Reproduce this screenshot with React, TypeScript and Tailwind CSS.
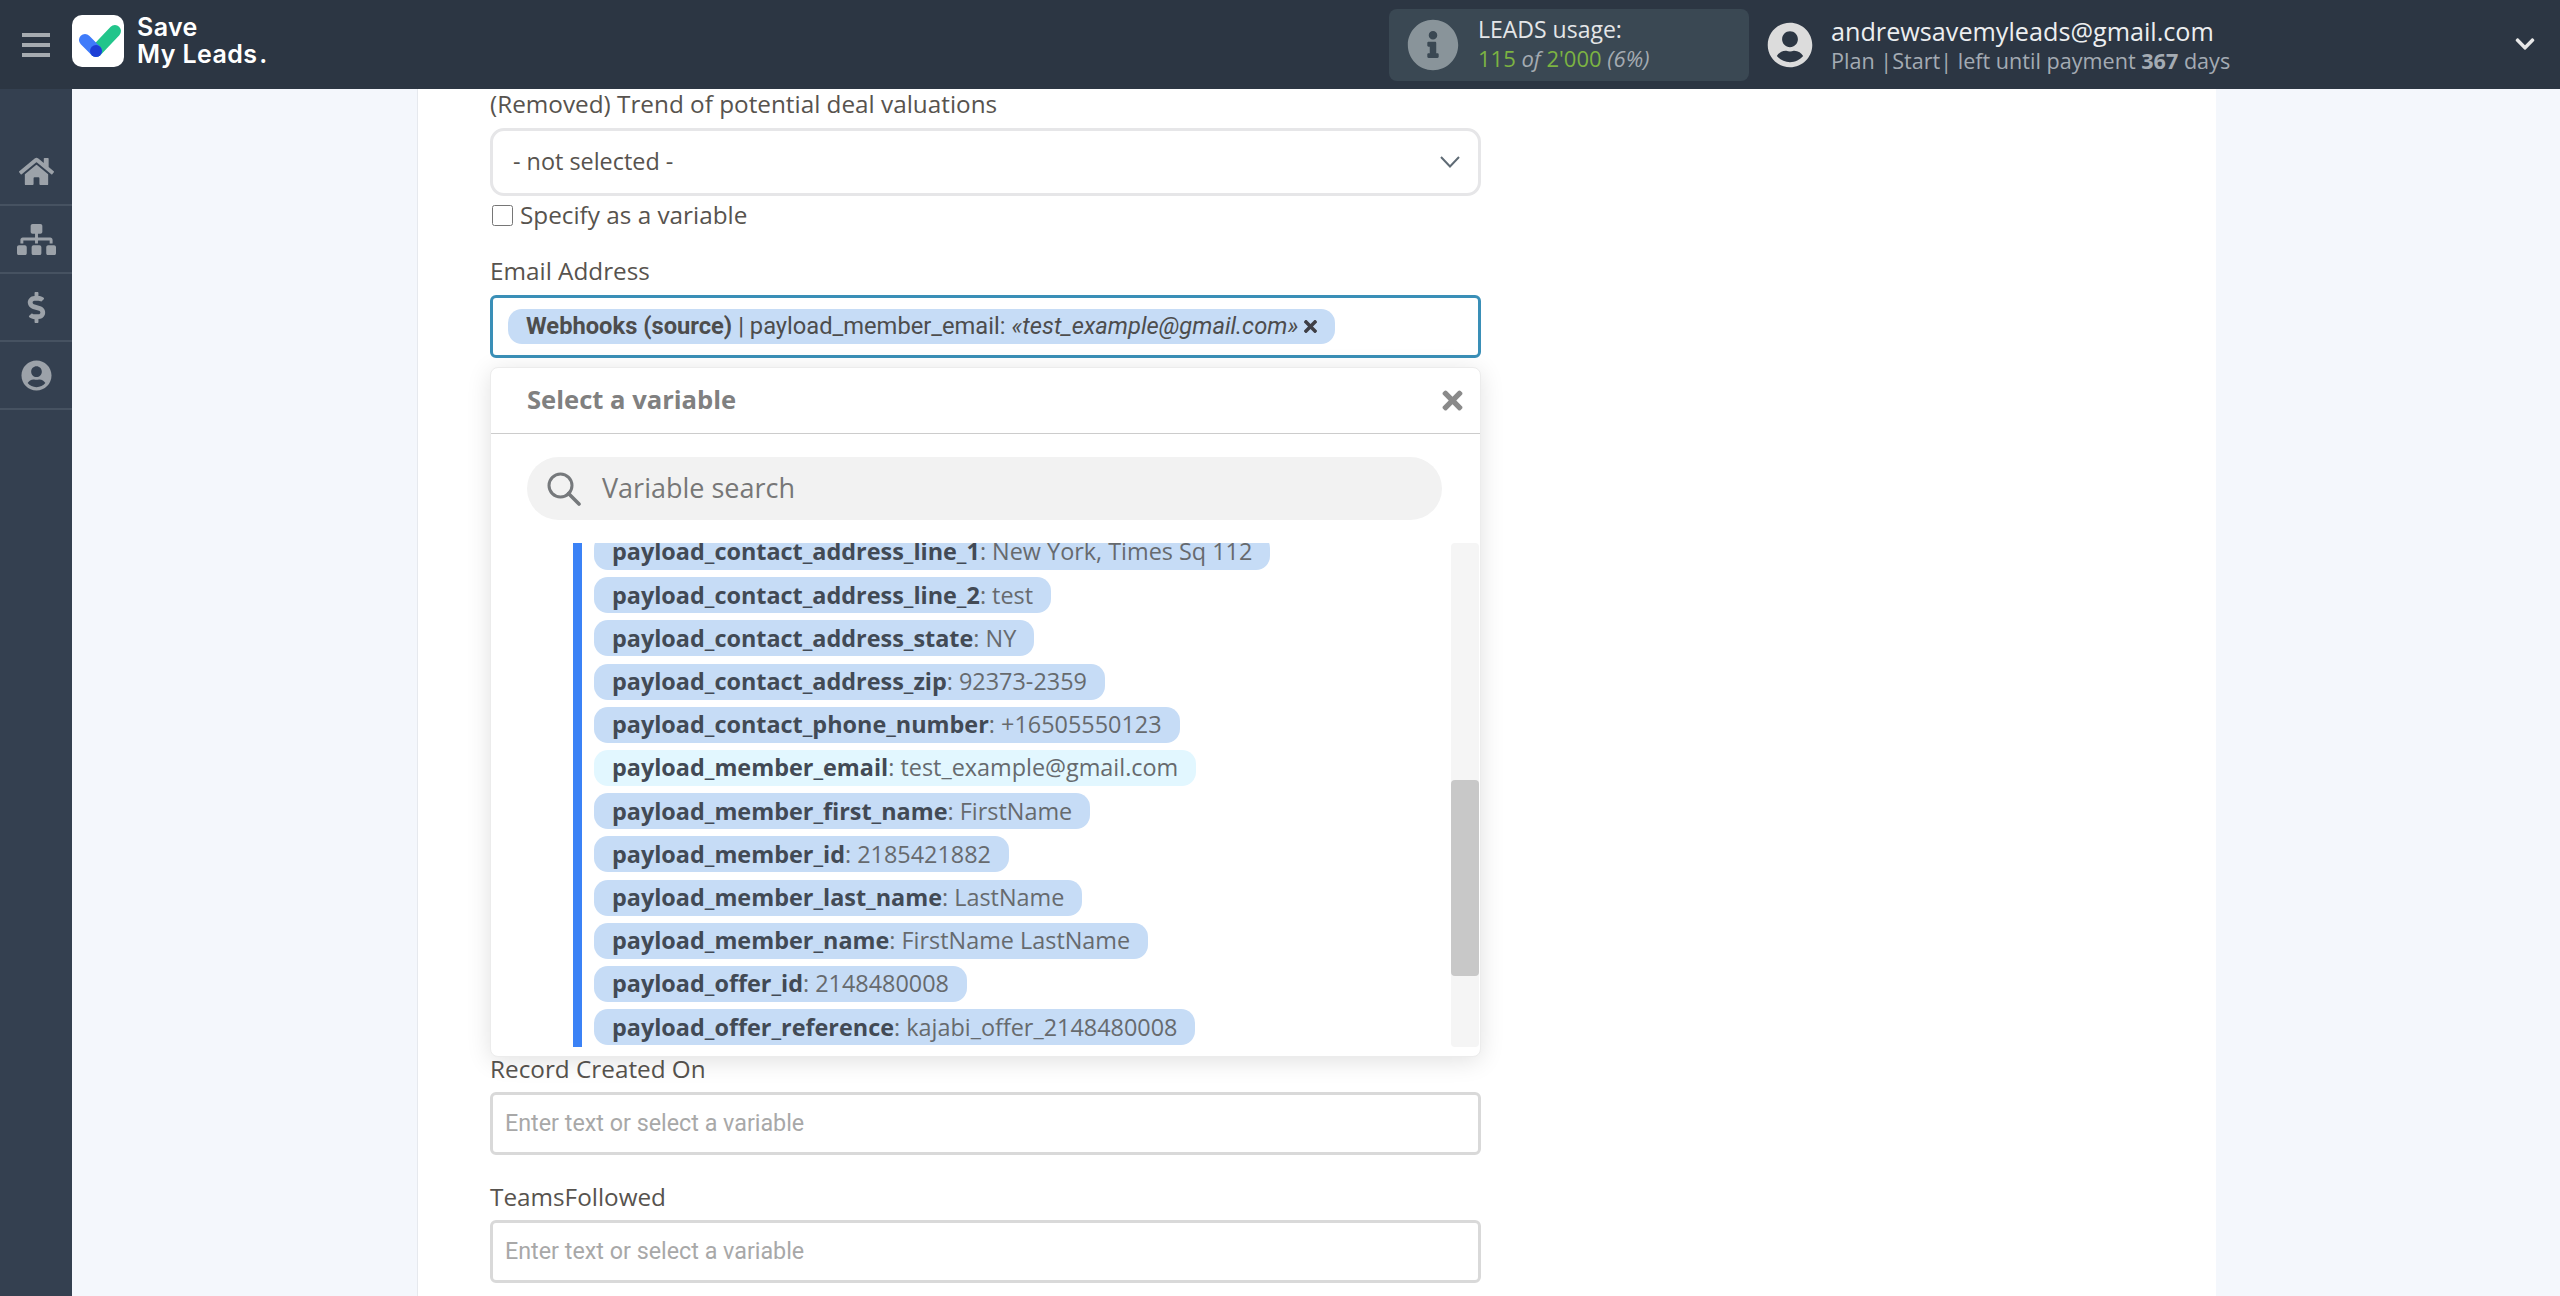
import React from "react";
import { FaHome, FaSitemap, FaDollarSign, FaUserCircle, FaInfoCircle, FaTimes, FaChevronDown } from "react-icons/fa";

const items: [string, string][] = [
  ["payload_contact_address_line_1", "New York, Times Sq 112"],
  ["payload_contact_address_line_2", "test"],
  ["payload_contact_address_state", "NY"],
  ["payload_contact_address_zip", "92373-2359"],
  ["payload_contact_phone_number", "+16505550123"],
  ["payload_member_email", "test_example@gmail.com"],
  ["payload_member_first_name", "FirstName"],
  ["payload_member_id", "2185421882"],
  ["payload_member_last_name", "LastName"],
  ["payload_member_name", "FirstName LastName"],
  ["payload_offer_id", "2148480008"],
  ["payload_offer_reference", "kajabi_offer_2148480008"],
];

function Field({ label }: { label: string }) {
  return (
    <div className="flex flex-col">
      <div className="text-[24.3px] leading-[30px] font-medium text-[#57534e]">{label}</div>
      <div className="mt-[8px] h-[63px] rounded-[6px] border-[3px] border-[#d9d9d9] bg-white flex items-center pl-[12px] font-['Roboto',sans-serif] text-[23.3px] text-[#a8a8a8]">
        Enter text or select a variable
      </div>
    </div>
  );
}

export default function App() {
  return (
    <div className="h-[1296px] w-[2560px] overflow-hidden flex flex-col bg-[#f4f7fc] font-['Open_Sans',sans-serif]">
      <header className="h-[89px] shrink-0 bg-[#2c3643] flex items-center">
        <div className="w-[72px] flex flex-col items-center gap-[6px]">
          <div className="w-[28px] h-[4px] bg-[#a6abb0]" />
          <div className="w-[28px] h-[4px] bg-[#a6abb0]" />
          <div className="w-[28px] h-[4px] bg-[#a6abb0]" />
        </div>
        <div className="w-[52px] h-[52px] rounded-[10px] bg-white -mt-[7px]">
          <svg viewBox="0 0 52 52" className="w-[52px] h-[52px]">
            <path d="M24 36 L43 16" stroke="#22c58b" strokeWidth="12" strokeLinecap="round" fill="none" />
            <path d="M13 25 L24 36" stroke="#3f7bfa" strokeWidth="12" strokeLinecap="round" fill="none" />
            <circle cx="24" cy="36" r="6" fill="#1d3fd6" />
          </svg>
        </div>
        <div className="ml-[13px] -mt-[8px] font-['Inter',sans-serif] font-semibold text-white text-[25px] leading-[27px] tracking-[0.4px]">
          <div>Save</div>
          <div>My Leads<span className="ml-[2px]">.</span></div>
        </div>
        <div className="ml-auto w-[360px] h-[72px] rounded-[8px] bg-[#3a4853] flex items-center pl-[18px] shrink-0">
          <FaInfoCircle className="text-[#89949a] text-[52px] shrink-0" />
          <div className="ml-[19px] -mt-[3px] flex flex-col">
            <div className="text-[23px] leading-[30px] text-[#e4e6e8]">LEADS usage:</div>
            <div className="text-[22px] leading-[29px] italic text-[#a4abb1]">
              <span className="not-italic text-[#7cb342]">115</span> of <span className="not-italic text-[#7cb342]">2'000</span> (6%)
            </div>
          </div>
        </div>
        <FaUserCircle className="ml-[18px] text-[#dcdcdc] text-[46px] shrink-0" />
        <div className="ml-[18px] flex flex-col w-[682px] shrink-0">
          <div className="text-[25.2px] leading-[32px] text-[#eceef0]">andrewsavemyleads@gmail.com</div>
          <div className="text-[21.6px] leading-[28px] text-[#a4abb3]">
            Plan |Start| left until payment <b className="font-bold">367</b> days
          </div>
        </div>
        <FaChevronDown className="text-[#e8e8e8] text-[22px] mr-[24px] ml-px -mt-[2px] shrink-0" />
      </header>
      <div className="flex-1 flex min-h-0">
        <aside className="w-[72px] shrink-0 bg-[#344050] pt-[49px]">
          {[
            <FaHome className="text-[35px]" />,
            <FaSitemap className="text-[39px]" />,
            <FaDollarSign className="text-[31px]" />,
            <FaUserCircle className="text-[31px]" />,
          ].map((ic, i) => (
            <div key={i} className="h-[68px] border-b-2 border-[#465261] flex items-center justify-center text-[#9ca2a9]">
              {ic}
            </div>
          ))}
        </aside>
        <main className="ml-[345px] w-[1799px] bg-white border-l border-[#e6e9ee] pl-[72px] flex flex-col">
          <div className="w-[991px] flex flex-col">
            <div className="text-[24.3px] leading-[30px] font-medium text-[#57534e] whitespace-nowrap">(Removed) Trend of potential deal valuations</div>
            <div className="mt-[9px] h-[68px] rounded-[14px] border-[3px] border-[#e6e6e8] flex items-center justify-between pl-[20px] pr-[18px] text-[23.4px] text-[#57534e]">
              <span>- not selected -</span>
              <svg viewBox="0 0 20 12" className="w-[20px] h-[12px]" fill="none" stroke="#5f6b75" strokeWidth="2"><path d="M1 1 L10 10.5 L19 1" /></svg>
            </div>
            <label className="mt-[4px] flex items-center gap-[7px] text-[24.3px] leading-[30px] font-medium text-[#57534e]">
              <input type="checkbox" readOnly className="w-[21px] h-[21px] ml-[2px]" />
              Specify as a variable
            </label>
            <div className="mt-[26px] text-[24.3px] leading-[30px] font-medium text-[#57534e]">Email Address</div>
            <div className="mt-[9px] h-[63px] rounded-[6px] border-[3px] border-[#3a8fb7] flex items-center pl-[15px]">
              <div className="h-[35px] rounded-[14px] bg-[#c6dcf6] flex items-center pl-[18px] pr-[15px] font-['Roboto',sans-serif] text-[23.7px] text-[#4d4d4d] whitespace-nowrap">
                <b className="font-bold">Webhooks (source)</b>
                <span className="ml-[6px]">| payload_member_email:</span>
                <i className="ml-[6px]">«test_example@gmail.com»</i>
                <FaTimes className="ml-[3px] text-[#3f3f46] text-[19px]" />
              </div>
            </div>
            <div className="mt-[9px] h-[690px] rounded-[8px] border border-[#ececec] bg-white shadow-[0_4px_24px_rgba(0,0,0,0.12)] flex flex-col relative z-10">
              <div className="h-[66px] shrink-0 border-b border-[#cccccc] flex items-center justify-between pl-[36px] pr-[13px]">
                <span className="text-[25.6px] font-bold text-[#808080]">Select a variable</span>
                <FaTimes className="text-[#8a8a8a] text-[29px]" />
              </div>
              <div className="mx-[36px] mt-[23px] h-[63px] w-[915px] shrink-0 rounded-full bg-[#f2f2f2] flex items-center pl-[20px]">
                <svg viewBox="0 0 34 34" className="w-[34px] h-[34px]" fill="none" stroke="#76797c" strokeWidth="3"><circle cx="13.5" cy="13.5" r="11.5" /><path d="M21.5 21.5 L32 32" strokeWidth="3.6" strokeLinecap="round" /></svg>
                <span className="ml-[21px] text-[27px] text-[#777777]">Variable search</span>
              </div>
              <div className="mt-[23px] flex-1 min-h-0 flex pb-[9px]">
                <div className="ml-[82px] w-[9px] shrink-0 bg-[#3b82f6]" />
                <div className="flex-1 min-h-0 overflow-hidden pl-[12px]">
                  <div className="-mt-[9px] flex flex-col items-start gap-[7.2px]">
                    {items.map(([k, v]) => (
                      <div
                        key={k}
                        className={`h-[36px] rounded-[14px] px-[18px] flex items-center whitespace-pre text-[23.4px] text-[#666a6e] ${k === "payload_member_email" ? "bg-[#e2f7ff]" : "bg-[#c6dcf6]"}`}
                      >
                        <b className="font-bold text-[#424a55]">{k}</b>: {v}
                      </div>
                    ))}
                  </div>
                </div>
                <div className="w-[28px] shrink-0 rounded-[4px] bg-[#f5f5f5] flex flex-col pt-[237px] mr-px">
                  <div className="h-[196px] rounded-[4px] bg-[#c8c8c8]" />
                </div>
              </div>
            </div>
            <div className="mt-[-3px] flex flex-col gap-[27px]">
              <Field label="Record Created On" />
              <Field label="TeamsFollowed" />
            </div>
          </div>
        </main>
      </div>
    </div>
  );
}
